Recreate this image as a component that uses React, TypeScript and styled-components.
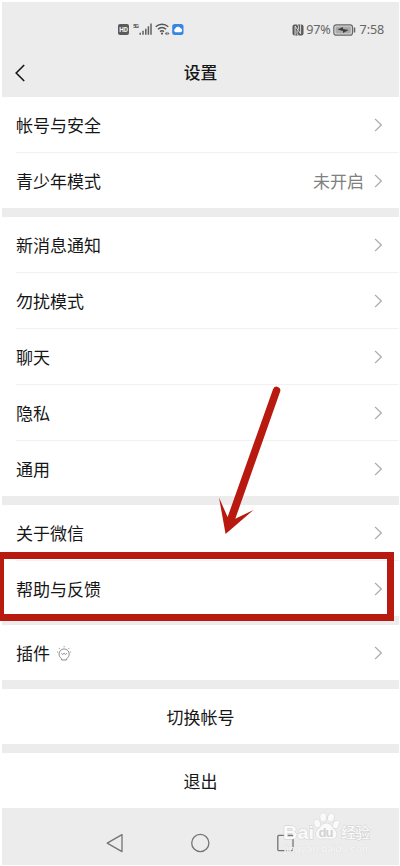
import React from 'react';
import styled, { createGlobalStyle } from 'styled-components';

const GlobalStyle = createGlobalStyle`
  * { box-sizing: border-box; }
  body { margin: 0; background: #fff; }
`;

const Screen = styled.main`
  position: relative;
  width: 400px;
  height: 866px;
  padding: 2px 1px 1px 2px;
  overflow: hidden;
  background: #fff;
  color: #161616;
  font-family: Roboto, "Noto Sans CJK SC", sans-serif;
`;

const Page = styled.div`
  display: flex;
  flex-direction: column;
  gap: 9px;
  height: 863px;
  background: #ececec;
`;

const Top = styled.header`
  height: 95px;
  margin-bottom: -9px;
`;

const StatusBar = styled.div`
  display: flex;
  align-items: center;
  justify-content: space-between;
  height: 55px;
  padding: 0 15px 0 115px;
  color: #666;
`;

const StatusGroup = styled.div`
  display: flex;
  align-items: center;
`;

const StatusText = styled.span<{ $gap: number }>`
  margin-left: ${(p) => p.$gap}px;
  font: 12.6px/20px "Noto Sans", sans-serif;
  letter-spacing: -0.15px;
`;

const BatteryIcon = styled.svg`
  margin-left: 2px;
`;

const TitleBar = styled.div`
  display: grid;
  grid-template-columns: 40px 1fr 40px;
  align-items: center;
  height: 32px;
`;

const BackIcon = styled.svg`
  margin: 0 0 1px 12px;
`;

const Title = styled.h1`
  margin: 0;
  text-align: center;
  font-size: 16.8px;
  line-height: 32px;
  font-weight: 500;
`;

const Group = styled.section`
  background: #fff;
`;

const Row = styled.div`
  display: flex;
  align-items: center;
  height: 56px;
  margin-left: 14px;
  padding-right: 16px;
  border-bottom: 1px solid #f1f1f1;
  font-size: 17px;
  line-height: 24px;

  &:last-child {
    height: 55px;
    border-bottom: 0;
  }
`;

const RowLabel = styled.span`
  flex: 1;
  display: flex;
  align-items: center;
  gap: 6px;
  padding-top: 2px;
`;

const RowValue = styled.span`
  margin-right: 10px;
  padding-top: 2px;
  color: #808080;
`;

const ActionRow = styled.div`
  height: 55px;
  padding-top: 2px;
  text-align: center;
  font-size: 17px;
  line-height: 55px;
`;

const NavBar = styled.nav`
  display: flex;
  align-items: center;
  gap: 65px;
  height: 57px;
  margin-top: -9px;
  padding: 12px 0 0 103px;
`;

const Highlight = styled.div`
  position: absolute;
  left: 0;
  top: 552px;
  width: 394px;
  height: 69px;
  border: 7px solid #b91a0f;
  border-left-width: 4px;
`;

const Arrow = styled.svg`
  position: absolute;
  left: 210px;
  top: 380px;
`;

const Watermark = styled.div`
  position: absolute;
  left: 282px;
  top: 811px;
  width: 92px;
  height: 44px;
`;

const Chevron = () => (
  <svg width="9" height="14" viewBox="0 0 9 14" fill="none" stroke="#aaa" strokeWidth="1.3">
    <path d="M1 .9 7.3 7 1 13.1" />
  </svg>
);

const Bulb = () => (
  <svg width="16" height="18" viewBox="-.2 0 14.2 16" fill="none" stroke="#777" strokeWidth=".75">
    <path d="M4.8 12.2C3.2 11 2.5 9.6 2.5 8a4.5 4.5 0 0 1 9 0c0 1.6-.7 3-2.3 4.2v1.1H4.8zM4.5 7.4l1.3 1 1.2-1 1.2 1 1.3-1M7 1v1M2.4 2.6l.7.8M11.6 2.6l-.7.8M.8 6.2l.8.2M13.2 6.2l-.8.2" />
  </svg>
);

const NetworkIcons = () => (
  <svg width="68" height="16" viewBox="117 22 68 16">
    <rect x="118" y="24" width="11" height="11" rx="2" fill="#5b5b5b" />
    <text x="119.2" y="32.1" fill="#f4f4f4" fontSize="6.5" fontWeight="700" fontFamily="Roboto" textLength="8.7">HD</text>
    <text x="133" y="28" fill="#555" fontSize="5.8" fontWeight="700" fontFamily="Roboto" textLength="6">5G</text>
    <path d="M140.2 34.7v-2M143 34.7v-4M145.8 34.7v-6M148.4 34.7v-8.5M151 34.7V23.6" stroke="#606060" strokeWidth="1.5" />
    <g fill="none" stroke="#555" strokeWidth="1.4">
      <path d="M155.7 26.8c3.7-3.4 8.9-3.4 12.6 0M157.9 29.3c2.4-2.1 5.8-2.1 8.2 0M160 31.6c1.2-1 2.8-1 4 0" />
    </g>
    <circle cx="162" cy="33.6" r="1.1" fill="#555" />
    <path d="m166.8 31.7-2 1.9 2 1.7zM167.5 31.7l2 1.9-2 1.7z" fill="#666" />
    <rect x="172.2" y="24" width="11.3" height="11" rx="2.5" fill="#3586e4" />
    <path d="M175.3 32.2a2 2 0 0 1 0-3.6 2.8 2.8 0 0 1 5-.7 2.2 2.2 0 0 1 .3 4.3z" fill="#fff" />
  </svg>
);

const Nfc = () => (
  <svg width="12" height="12" viewBox="0 0 12 12">
    <path d="M2.5.5h7Q11.5.5 11.5 2.5v7q0 2-2 2h-7q-2 0-2-2v-7q0-2 2-2z" fill="#595959" />
    <path d="M3.1 11.5V2l5.5 7.8V.5M5.1 0l1.5 2.5v3M5.1 6.5v3l1.5 2.5" fill="none" stroke="#ececec" strokeWidth=".9" />
  </svg>
);

const Battery = () => (
  <BatteryIcon width="23" height="12" viewBox="0 0 23 12">
    <rect x=".8" y=".8" width="18.7" height="10.4" rx="2.5" fill="#ddd" stroke="#666" strokeWidth="1.2" />
    <rect x="2.5" y="2.5" width="15.3" height="7" rx="1" fill="#aaa" />
    <path d="M4.5 5.6 10 3.1v1.8l5.7 1.2L10 8.9V7z" fill="#3f3f3f" />
    <path d="M21.5 3.5v5" stroke="#666" strokeWidth="1.5" />
  </BatteryIcon>
);

const groups: { label: string; value?: string; bulb?: boolean }[][] = [
  [{ label: '帐号与安全' }, { label: '青少年模式', value: '未开启' }],
  [{ label: '新消息通知' }, { label: '勿扰模式' }, { label: '聊天' }, { label: '隐私' }, { label: '通用' }],
  [{ label: '关于微信' }, { label: '帮助与反馈' }],
  [{ label: '插件', bulb: true }],
];

export default function App() {
  return (
    <Screen>
      <GlobalStyle />
      <Page>
        <Top>
          <StatusBar>
            <NetworkIcons />
            <StatusGroup>
              <Nfc />
              <StatusText $gap={2}>97%</StatusText>
              <Battery />
              <StatusText $gap={4}>7:58</StatusText>
            </StatusGroup>
          </StatusBar>
          <TitleBar>
            <BackIcon width="12" height="18" viewBox="0 0 12 18" fill="none" stroke="#161616" strokeWidth="1.6">
              <path d="M10.2 1 2.2 9l8 8" />
            </BackIcon>
            <Title>设置</Title>
          </TitleBar>
        </Top>
        {groups.map((rows) => (
          <Group key={rows[0].label}>
            {rows.map((row) => (
              <Row key={row.label}>
                <RowLabel>
                  {row.label}
                  {row.bulb && <Bulb />}
                </RowLabel>
                {row.value && <RowValue>{row.value}</RowValue>}
                <Chevron />
              </Row>
            ))}
          </Group>
        ))}
        <Group><ActionRow>切换帐号</ActionRow></Group>
        <Group><ActionRow>退出</ActionRow></Group>
        <NavBar>
          <svg width="20" height="20" viewBox="0 0 20 20" fill="none" stroke="#747474" strokeWidth="1.3" strokeLinejoin="round">
            <path d="M17 1.6v17L2.2 10.1z" />
          </svg>
          <svg width="20" height="20" viewBox="0 0 20 20" fill="none" stroke="#747474" strokeWidth="1.3">
            <circle cx="10.3" cy="10" r="8.6" />
          </svg>
          <svg width="20" height="20" viewBox="0 0 20 20" fill="none" stroke="#747474" strokeWidth="1.3">
            <rect x="2.8" y="2.4" width="15.2" height="15.2" rx="1" />
          </svg>
        </NavBar>
      </Page>
      <Highlight />
      <Arrow width="75" height="160" viewBox="210 380 75 160" fill="#b91a0f">
        <path d="M273 389.2a3.7 3.7 0 0 1 7.1 2.6L235.3 518.8 253.4 510 225.6 534 219 497.6 227.6 517z" />
      </Arrow>
      <Watermark>
        <svg width="92" height="44" viewBox="282 811 92 44" fill="#fafafa" stroke="#cfcfcf" strokeWidth=".9" paintOrder="stroke">
          <text x="283" y="839" fontSize="19" fontWeight="700" fontFamily="Liberation Sans" textLength="31" lengthAdjust="spacingAndGlyphs">Bai</text>
          <ellipse cx="317.2" cy="823.4" rx="2.9" ry="3.9" transform="rotate(-15 317.2 823.4)" />
          <ellipse cx="323.2" cy="817.3" rx="3" ry="4.2" />
          <ellipse cx="331" cy="817.5" rx="3" ry="4.2" transform="rotate(12 331 817.5)" />
          <ellipse cx="336" cy="824.5" rx="2.8" ry="3.9" transform="rotate(18 336 824.5)" />
          <path d="M326.5 823.2c4 0 5.2 4 8.1 6.5 3.3 3 2.5 8.7-2.3 9-3.7.3-7.6-.4-11.2 0-5.2.4-6.5-5.7-3.2-9 3-2.7 4.3-6.5 8.6-6.5z" />
          <text x="318.5" y="837" fontSize="13" fontWeight="700" fontFamily="Liberation Sans" fill="#d2d2d2" stroke="none" textLength="15">du</text>
          <text x="341" y="838" fontSize="15" fontWeight="500" fontFamily="Noto Sans CJK SC" textLength="29">经验</text>
          <text x="284" y="851.5" fontSize="9.5" fontFamily="Liberation Sans" fill="#f8f8f8" stroke="#dedede" strokeWidth=".6" textLength="87" lengthAdjust="spacingAndGlyphs">jingyan.baidu.com</text>
        </svg>
      </Watermark>
    </Screen>
  );
}
